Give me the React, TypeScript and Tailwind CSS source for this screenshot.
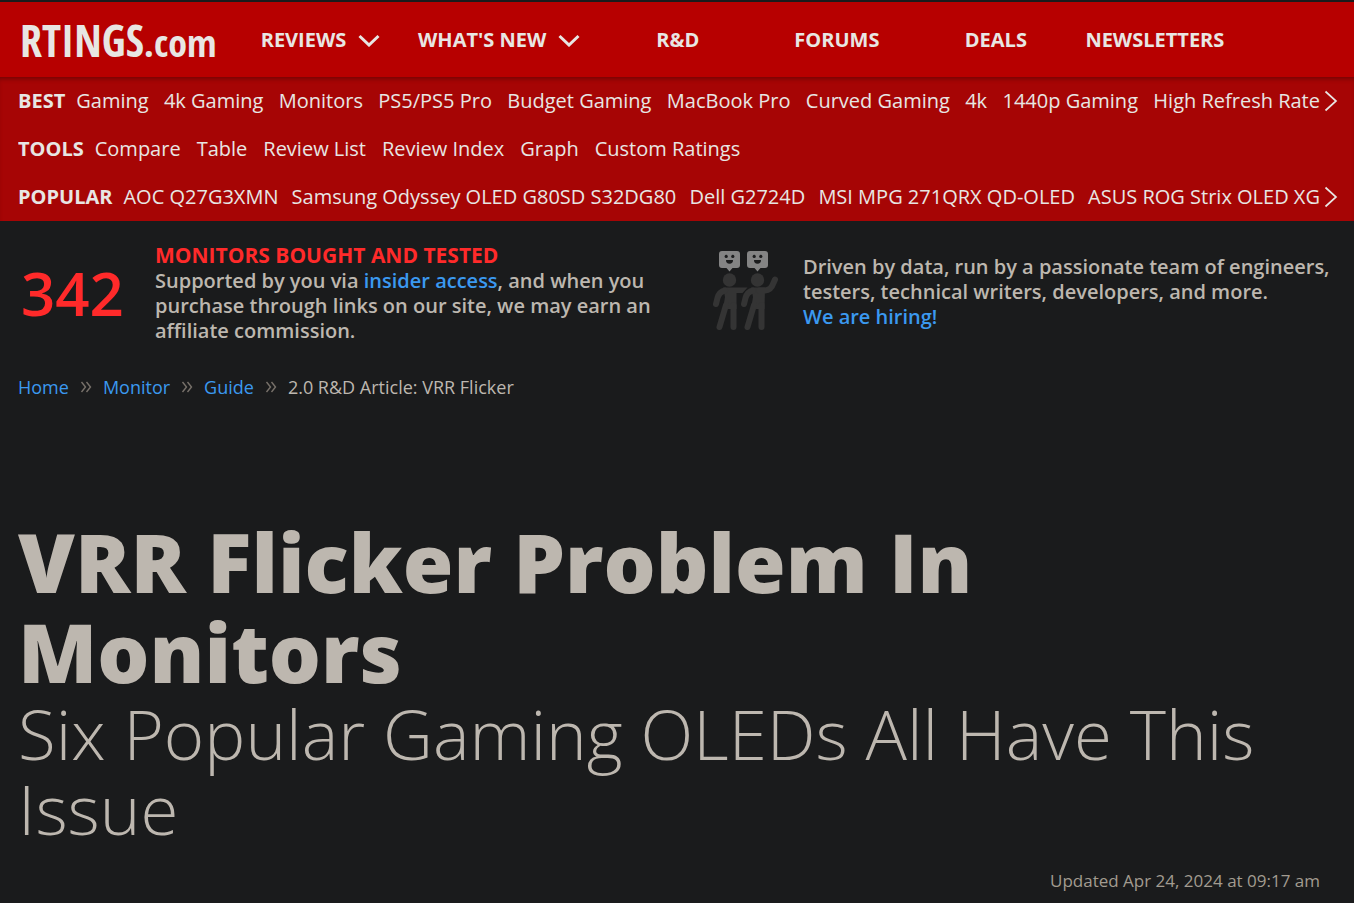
import React from 'react';
import clsx from 'clsx';

interface NavItem {
  label: string;
  menu?: boolean;
}

interface LinkRowData {
  title: string;
  links: string[];
  more?: boolean;
}

const NAV_ITEMS: NavItem[] = [
  { label: 'REVIEWS', menu: true },
  { label: "WHAT'S NEW", menu: true },
  { label: 'R&D' },
  { label: 'FORUMS' },
  { label: 'DEALS' },
  { label: 'NEWSLETTERS' },
];

const LINK_ROWS: LinkRowData[] = [
  {
    title: 'BEST',
    links: [
      'Gaming',
      '4k Gaming',
      'Monitors',
      'PS5/PS5 Pro',
      'Budget Gaming',
      'MacBook Pro',
      'Curved Gaming',
      '4k',
      '1440p Gaming',
      'High Refresh Rate',
    ],
    more: true,
  },
  {
    title: 'TOOLS',
    links: ['Compare', 'Table', 'Review List', 'Review Index', 'Graph', 'Custom Ratings'],
  },
  {
    title: 'POPULAR',
    links: [
      'AOC Q27G3XMN',
      'Samsung Odyssey OLED G80SD S32DG80',
      'Dell G2724D',
      'MSI MPG 271QRX QD-OLED',
      'ASUS ROG Strix OLED XG',
    ],
    more: true,
  },
];

const CRUMBS = ['Home', 'Monitor', 'Guide'];

const ChevronDown: React.FC = () => (
  <svg viewBox="0 0 22 14" className="w-[22px] h-[14px] shrink-0" fill="none" stroke="currentColor" strokeWidth="3" aria-hidden="true">
    <path d="M1.5 3 L11 12 L20.5 3" />
  </svg>
);

const ChevronRight: React.FC = () => (
  <svg viewBox="0 0 14 22" className="w-[14px] h-[22px]" fill="none" stroke="currentColor" strokeWidth="1.7" aria-hidden="true">
    <path d="M1.5 1.5 L12 11 L1.5 20.5" />
  </svg>
);

const CrumbSeparator: React.FC = () => (
  <svg viewBox="0 0 12 12" className="w-3 h-3 text-[#77716a]" fill="none" stroke="currentColor" strokeWidth="1.4" aria-hidden="true">
    <path d="M1.5 1 L5.5 6 L1.5 11 M6.5 1 L10.5 6 L6.5 11" />
  </svg>
);

const Bubble: React.FC<{ x: number }> = ({ x }) => (
  <g transform={`translate(${x} 0)`}>
    <path fill="#848484" d="M3 0 H18 Q21 0 21 3 V14 Q21 17 18 17 H13.5 L10.5 20.5 L7.5 17 H3 Q0 17 0 14 V3 Q0 0 3 0 Z" />
    <circle cx="7.2" cy="5.4" r="1.6" fill="#1b1c1d" />
    <circle cx="13.8" cy="5.4" r="1.6" fill="#1b1c1d" />
    <path fill="#1b1c1d" d="M7 9 H14 Q14 12.8 10.5 12.8 Q7 12.8 7 9 Z" />
  </g>
);

const TeamIcon: React.FC = () => (
  <svg viewBox="0 0 66 80" className="w-[66px] h-[80px] shrink-0" aria-hidden="true">
    <Bubble x={6} />
    <Bubble x={34} />
    <g fill="#343434">
      <circle cx="16.5" cy="29" r="6.7" />
      <circle cx="44.5" cy="29" r="6.7" />
      <path d="M10 36.5 H34.5 L29.5 42 H23.5 V58 H10 L12 46 Z" />
      <path d="M38 36.5 H52 L51.5 58 H38 L40 46 Z" />
    </g>
    <g fill="none" stroke="#343434" strokeWidth="6" strokeLinecap="round" strokeLinejoin="round">
      <path d="M12 39.5 Q6 41 4.5 47 L3 53" />
      <path d="M13 54 L6.5 76" />
      <path d="M20.5 54 V76" />
      <path d="M40 39.5 Q34 41 32.5 47 L31 53" />
      <path d="M41 54 L34.5 76" />
      <path d="M48.5 54 V76" />
      <path d="M46 39.5 H52 Q58 39 60 33 L62 28.5" />
    </g>
  </svg>
);

const LinkRow: React.FC<LinkRowData> = ({ title, links, more }) => (
  <div className="flex items-center h-12 pl-[18px] pr-4">
    <div className="flex-1 min-w-0 flex items-center overflow-hidden whitespace-nowrap">
      <h2 className="mr-[11px] font-bold">{title}</h2>
      {/* Rows that continue past the edge spread up to the arrow */}
      <ul className={clsx('flex', more ? 'flex-1 justify-between' : 'gap-4')}>
        {links.map((link) => (
          <li key={link}>
            <a href="#">{link}</a>
          </li>
        ))}
      </ul>
    </div>
    {more && (
      <button type="button" aria-label={`More ${title.toLowerCase()} links`} className="ml-1">
        <ChevronRight />
      </button>
    )}
  </div>
);

const App: React.FC = () => {
  return (
    <div className="min-h-screen bg-[#1a1b1c] pt-[2px] font-['Open_Sans',sans-serif] text-[#bdb7af]">
      <header className="text-[#e8e6e3]">
        <div className="flex items-center h-[75px] bg-[#b70000]">
          <a href="#" className="w-[241px] pl-5 shrink-0 flex items-baseline font-['Open_Sans_Condensed','Open_Sans',sans-serif] font-bold leading-none whitespace-nowrap">
            <span className="text-[44px]">RTINGS</span>
            <span className="text-[38px]">.com</span>
          </a>
          <nav className="flex text-[20px] font-bold whitespace-nowrap">
            {NAV_ITEMS.map(({ label, menu }) =>
              menu ? (
                <button key={label} type="button" className="min-w-[159px] px-[18px] flex items-center justify-center gap-3 font-bold">
                  {label}
                  <ChevronDown />
                </button>
              ) : (
                <a key={label} href="#" className="min-w-[159px] text-center">
                  {label}
                </a>
              ),
            )}
          </nav>
        </div>
        <div className="bg-[#a60505] text-[20px] shadow-[inset_0_4px_4px_-2px_rgba(0,0,0,0.3)]">
          {LINK_ROWS.map((row) => (
            <LinkRow key={row.title} {...row} />
          ))}
        </div>
      </header>

      {/* Intro strip */}
      <section className="grid grid-cols-2 h-[142px] text-[20px] leading-[25px] font-semibold">
        <div className="flex items-center pt-0.5 pl-[21px]">
          <strong className="w-[134px] shrink-0 text-[60px] leading-none font-semibold text-[#ff2a2a]">342</strong>
          <div>
            <h2 className="text-[21px] font-bold text-[#ff2a2a]">MONITORS BOUGHT AND TESTED</h2>
            <p>
              Supported by you via <a href="#" className="text-[#3b99f0]">insider access</a>, and when you
              <br />
              purchase through links on our site, we may earn an
              <br />
              affiliate commission.
            </p>
          </div>
        </div>
        <div className="flex items-center pb-0.5 pl-9 gap-6">
          <TeamIcon />
          <p className="whitespace-nowrap">
            Driven by data, run by a passionate team of engineers,
            <br />
            testers, technical writers, developers, and more.
            <br />
            <a href="#" className="text-[#3b99f0]">We are hiring!</a>
          </p>
        </div>
      </section>

      <nav aria-label="Breadcrumb" className="h-12 px-[18px] text-[18px]">
        <ol className="h-full flex items-center gap-[11px]">
          {CRUMBS.map((crumb) => (
            <li key={crumb} className="flex items-center gap-[11px]">
              <a href="#" className="text-[#3b99f0]">{crumb}</a>
              <CrumbSeparator />
            </li>
          ))}
          <li>2.0 R&amp;D Article: VRR Flicker</li>
        </ol>
      </nav>

      <main className="px-[18px] pt-[105px]">
        <h1 className="max-w-[1100px] text-[82px] leading-[90px] font-extrabold">
          VRR Flicker Problem In
          <br />
          Monitors
        </h1>
        <p className="text-[69px] leading-[75px] font-light">
          Six Popular Gaming OLEDs All Have This
          <br />
          Issue
        </p>
        <p className="mt-6 pr-4 text-right text-[17px] leading-[22px] text-[#a29b90]">Updated Apr 24, 2024 at 09:17 am</p>
      </main>
    </div>
  );
};

export default App;
